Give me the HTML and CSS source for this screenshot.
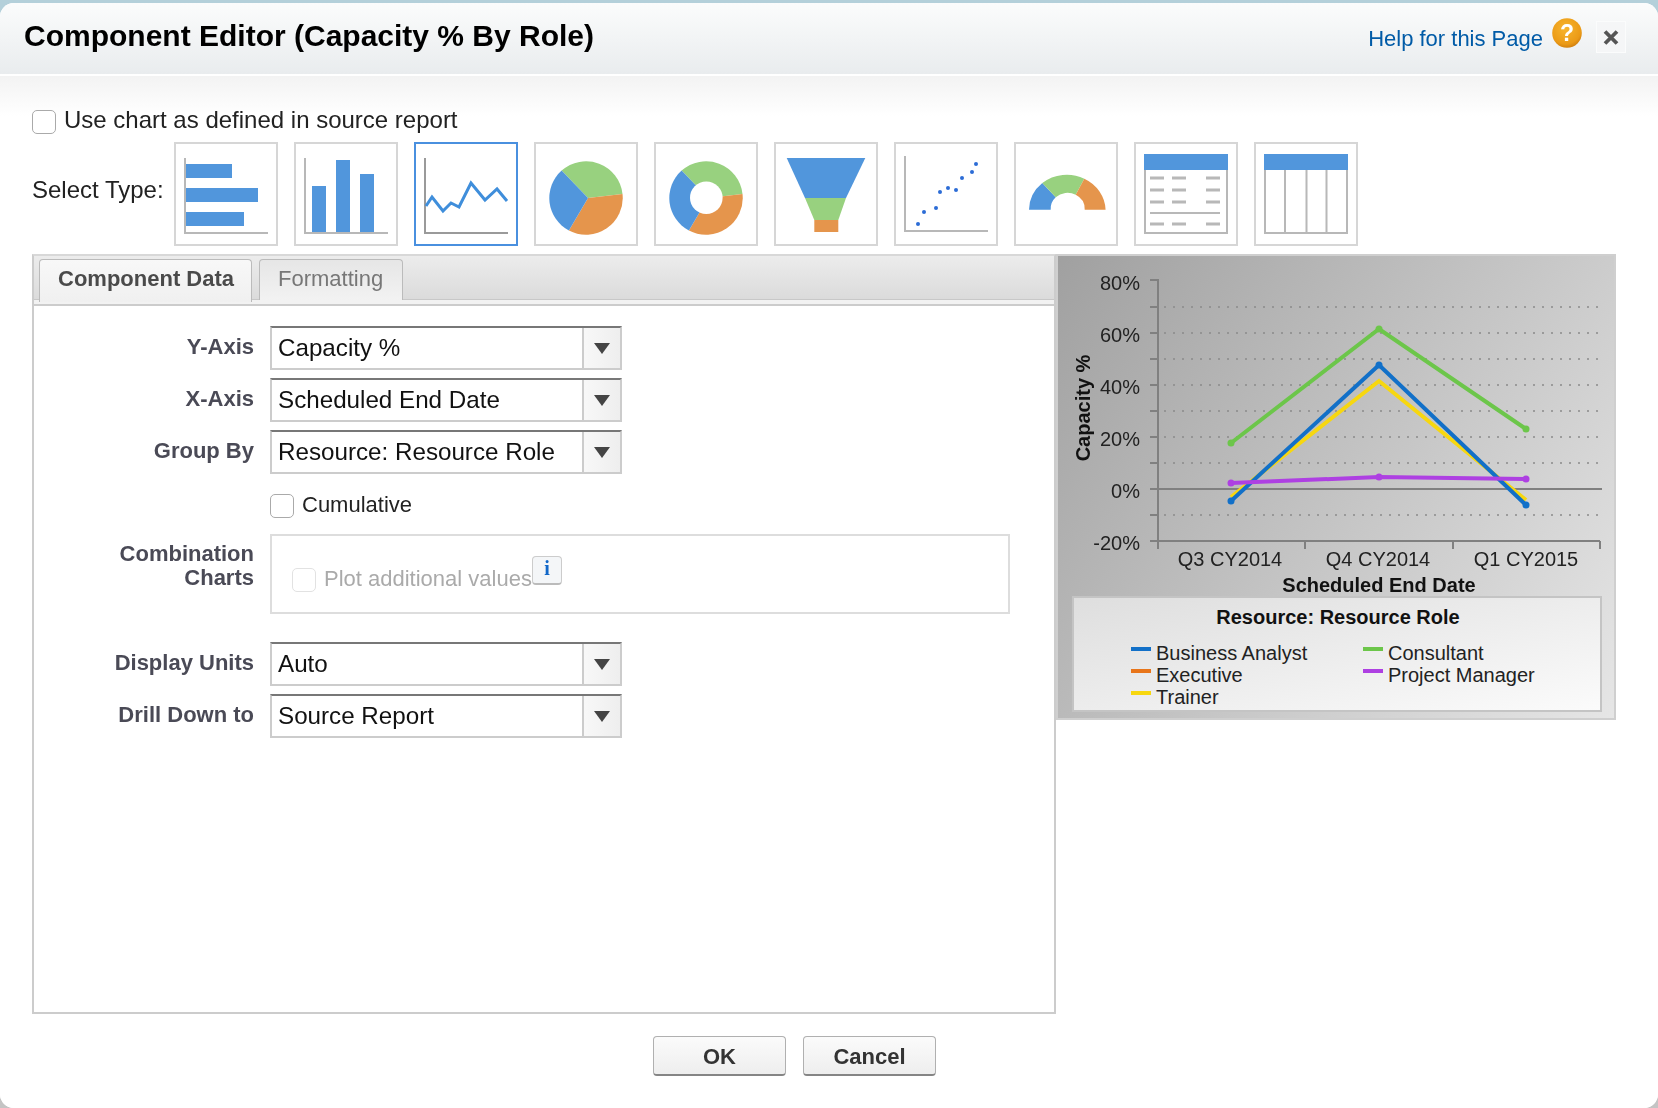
FILE: index.html
```html
<!DOCTYPE html>
<html lang="en">
<head>
<meta charset="utf-8">
<title>Component Editor</title>
<link rel="stylesheet" href="styles.css">
</head>
<body>
<div class="dialog">
  <header class="head">
    <h1 class="title">Component Editor (Capacity % By Role)</h1>
    <a class="help">Help for this Page</a>
    <svg class="help-ic" viewBox="0 0 30 30"><defs><radialGradient id="o" cx=".45" cy=".35" r=".7"><stop offset="0" stop-color="#f7b52e"/><stop offset=".75" stop-color="#eb9a16"/><stop offset="1" stop-color="#c9780c"/></radialGradient></defs><circle cx="15" cy="15" r="14.8" fill="url(#o)"/><text x="15" y="23" text-anchor="middle" class="help-q">?</text></svg>
    <div class="close"><svg class="close-x" viewBox="0 0 16 15"><path d="M2 1.5l12 12M14 1.5l-12 12" stroke="#555" stroke-width="3.8" fill="none"/></svg></div>
  </header>
  <div class="body">
    <label class="use"><span class="cb"></span>Use chart as defined in source report</label>
    <div class="types">
      <span class="types-l">Select Type:</span>
      <div class="tile"><svg viewBox="0 0 100 100"><path d="M9 14V89H92" class="ax"/><path d="M10 20h46v14H10zM10 44h72v14H10zM10 68h58v14H10z" class="b"/></svg></div>
      <div class="tile"><svg viewBox="0 0 100 100"><path d="M9 14V89H92" class="ax"/><path d="M16 42h14v46H16zM40 16h14v72H40zM64 30h14v58H64z" class="b"/></svg></div>
      <div class="tile on"><svg viewBox="0 0 100 100"><path d="M9 14V89H92" class="ax dk"/><polyline points="10,62 16,53 27,67 35,59 43,63 55,39 69,56 81,45 91,57" class="ln"/></svg></div>
      <div class="tile"><svg viewBox="0 0 100 100"><path d="M52 54L25.6 26.6A36.7 36.7 0 0 1 86.500 49.900Z" class="g"/><path d="M52 54L86.500 49.900A36.7 36.7 0 0 1 32.900 86.500Z" class="o"/><path d="M52 54L32.900 86.500A36.7 36.7 0 0 1 25.6 26.6Z" class="b"/></svg></div>
      <div class="tile"><svg viewBox="0 0 100 100"><path d="M52 54L25.6 26.6A36.7 36.7 0 0 1 86.500 49.900Z" class="g"/><path d="M52 54L86.500 49.900A36.7 36.7 0 0 1 32.900 86.500Z" class="o"/><path d="M52 54L32.900 86.500A36.7 36.7 0 0 1 25.6 26.6Z" class="b"/><circle cx="50.3" cy="53.7" r="16.3" fill="#fff"/></svg></div>
      <div class="tile"><svg viewBox="0 0 100 100"><path d="M10.7 14H89.3L70 54H29Z" class="b"/><path d="M29 54H70L62.3 76H38.3Z" class="g"/><path d="M38.3 76H62.3V88H38.3Z" class="o"/></svg></div>
      <div class="tile"><svg viewBox="0 0 100 100"><path d="M9 12V87H92" class="ax"/><g class="dots"><circle cx="22" cy="80" r="2"/><circle cx="28" cy="68" r="2"/><circle cx="40" cy="64" r="2"/><circle cx="44" cy="48" r="2"/><circle cx="52" cy="44" r="2"/><circle cx="60" cy="46" r="2"/><circle cx="66" cy="34" r="2"/><circle cx="76" cy="28" r="2"/><circle cx="80" cy="20" r="2"/></g></svg></div>
      <div class="tile"><svg viewBox="0 0 100 100"><path d="M13 65.7A38.3 36 0 0 1 26.3 39L39.7 53.3A17 16 0 0 0 34.7 65.7Z" class="b"/><path d="M26.3 39A38.3 36 0 0 1 68.3 34.7L59.7 50.7A17 16 0 0 0 39.7 53.3Z" class="g"/><path d="M68.3 34.7A38.3 36 0 0 1 89.6 65.7H68.7A17 16 0 0 0 59.7 50.7Z" class="o"/></svg></div>
      <div class="tile"><svg viewBox="0 0 100 100"><path d="M9 26V89H91V26" class="ax"/><path d="M8 10H92V26H8Z" class="b"/><path d="M14 34h14M36 34h14M70 34h14M14 46h14M36 46h14M70 46h14M14 58h14M36 58h14M70 58h14M14 80h14M36 80h14M70 80h14" class="ax th"/><path d="M14 69H84" class="ax"/></svg></div>
      <div class="tile"><svg viewBox="0 0 100 100"><path d="M9 26V89H91V26M29 26V89M50.500 26V89M70.500 26V89" class="ax"/><path d="M8 10H92V26H8Z" class="b"/></svg></div>
    </div>
    <div class="editor">
      <section class="panel">
        <div class="tabs">
          <div class="tab active">Component Data</div>
          <div class="tab">Formatting</div>
        </div>
        <div class="form">
          <div class="row"><span class="lab">Y-Axis</span><div class="sel"><span class="val">Capacity %</span><span class="drop"><i class="tri"></i></span></div></div>
          <div class="row"><span class="lab">X-Axis</span><div class="sel"><span class="val">Scheduled End Date</span><span class="drop"><i class="tri"></i></span></div></div>
          <div class="row"><span class="lab">Group By</span><div class="sel"><span class="val">Resource: Resource Role</span><span class="drop"><i class="tri"></i></span></div></div>
          <div class="row cum"><span class="lab"></span><label class="cum-l"><span class="cb"></span>Cumulative</label></div>
          <div class="row combo"><span class="lab two">Combination<br>Charts</span>
            <div class="box"><span class="cb off"></span><span class="plot">Plot additional values</span><span class="info">i</span></div>
          </div>
          <div class="row units"><span class="lab">Display Units</span><div class="sel"><span class="val">Auto</span><span class="drop"><i class="tri"></i></span></div></div>
          <div class="row"><span class="lab">Drill Down to</span><div class="sel"><span class="val">Source Report</span><span class="drop"><i class="tri"></i></span></div></div>
        </div>
      </section>
      <figure class="chart">
        <svg viewBox="1056 254 560 466" width="560" height="466">
          <g class="grid"><path d="M1164 307H1600M1164 333H1600M1164 359H1600M1164 385H1600M1164 411H1600M1164 437H1600M1164 463H1600M1164 515H1600"/></g>
          <path d="M1150 280H1158V541M1150 307H1158M1150 333H1158M1150 359H1158M1150 385H1158M1150 411H1158M1150 437H1158M1150 463H1158M1150 515H1158M1150 541H1600M1158 541V549M1305 541V549M1453 541V549M1600 541V549M1150 489H1602" class="axis"/>
          <g class="t" text-anchor="end"><text x="1140" y="290">80%</text><text x="1140" y="342">60%</text><text x="1140" y="394">40%</text><text x="1140" y="446">20%</text><text x="1140" y="498">0%</text><text x="1140" y="550">-20%</text></g>
          <g class="t" text-anchor="middle"><text x="1230" y="566">Q3 CY2014</text><text x="1378" y="566">Q4 CY2014</text><text x="1526" y="566">Q1 CY2015</text></g>
          <text x="1379" y="592" text-anchor="middle" class="tb">Scheduled End Date</text>
          <text transform="translate(1090 408) rotate(-90)" text-anchor="middle" class="tb">Capacity %</text>
          <polyline points="1231,443 1379,329 1526,429" class="s green"/>
          <polyline points="1231,497 1379,381 1526,500" class="s yellow"/>
          <polyline points="1231,501 1379,365 1526,505" class="s blue"/>
          <polyline points="1231,483 1379,477 1526,479" class="s purple"/>
          <g class="m-green"><circle cx="1231" cy="443" r="3.500"/><circle cx="1379" cy="329" r="3.500"/><circle cx="1526" cy="429" r="3.500"/></g>
          <g class="m-blue"><circle cx="1231" cy="501" r="3.500"/><circle cx="1379" cy="365" r="3.500"/><circle cx="1526" cy="505" r="3.500"/></g>
          <g class="m-purple"><circle cx="1231" cy="483" r="3.500"/><circle cx="1379" cy="477" r="3.500"/><circle cx="1526" cy="479" r="3.500"/></g>
          <defs><linearGradient id="lg" x1="0" y1="0" x2="1" y2="1"><stop offset="0" stop-color="#dedede"/><stop offset="1" stop-color="#fbfbfb"/></linearGradient></defs>
          <rect x="1073" y="597" width="528" height="114" fill="url(#lg)" stroke="#c4c4c4" stroke-width="2"/>
          <text x="1338" y="624" text-anchor="middle" class="tb">Resource: Resource Role</text>
          <g class="t">
            <text x="1156" y="660">Business Analyst</text><text x="1156" y="682">Executive</text><text x="1156" y="704">Trainer</text>
            <text x="1388" y="660">Consultant</text><text x="1388" y="682">Project Manager</text>
          </g>
          <path d="M1131 649h20" class="k blue"/><path d="M1131 671h20" class="k orange"/><path d="M1131 693h20" class="k yellow"/><path d="M1363 649h20" class="k green"/><path d="M1363 671h20" class="k purple"/>
        </svg>
      </figure>
    </div>
    <div class="foot">
      <button class="btn ok">OK</button>
      <button class="btn cancel">Cancel</button>
    </div>
  </div>
</div>
</body>
</html>
```

FILE: styles.css
```css
html{background:linear-gradient(#b4d0da 0 50%,#c4c4c4 50%);height:100%}
body{margin:0;padding-top:3px;font-family:"Liberation Sans",Arial,sans-serif;color:#111}
.dialog{height:1105px;background:#fff;border-radius:14px;overflow:hidden;filter:blur(.3px)}
.head{display:flex;align-items:flex-start;height:71px;box-sizing:border-box;padding:15px 32px 0 24px;background:linear-gradient(#fbfcfc,#e9ecee)}
.title{flex:1;margin:0;font-size:30px;line-height:36px;font-weight:700;color:#000}
.help{margin-top:8px;font-size:22px;line-height:26px;color:#015ba7}
.help-ic{width:30px;height:30px;margin-left:9px}
.help-q{font:700 23px "Liberation Sans",sans-serif;fill:#fff}
.close{display:flex;align-items:center;justify-content:center;width:30px;height:32px;margin:3px 0 0 14px;background:#f5f6f7;border:1px solid #fbfcfc;box-sizing:border-box}
.close-x{width:16px;height:15px}
.body{height:1032px;margin-top:2px;padding:32px 42px 0 32px;box-sizing:border-box;background:linear-gradient(#f3f3f3,#fff 40px)}
.use{display:flex;height:26px;gap:8px;font-size:24px;line-height:24px;color:#222}
.cb{display:block;flex:none;width:24px;height:24px;box-sizing:border-box;border:1.5px solid #aaa;border-radius:5px;background:#fff;margin-top:2px}
.cb.off{border-color:#e2e2e2}
.types{display:flex;gap:16px;margin-top:8px}
.types-l{width:126px;margin-top:34px;font-size:24px;line-height:28px;color:#222;white-space:nowrap}
.tile{width:104px;height:104px;box-sizing:border-box;border:2px solid #d6d6d6;background:#fff}
.tile.on{border-color:#4a90df}
.tile svg{display:block;width:100px;height:100px;filter:blur(.3px)}
.b{fill:#5196dc}
.g{fill:#98d17f}
.o{fill:#e5954c}
.ax{fill:none;stroke:#b8b8b8;stroke-width:2}
.ax.dk{stroke:#9a9a9a}
.ax.th{stroke-width:3}
.ln{fill:none;stroke:#3f8edb;stroke-width:3}
.dots{fill:#2c6cd6}
.editor{display:flex;align-items:flex-start;margin-top:8px}
.panel{width:1024px;height:760px;box-sizing:border-box;border:2px solid #ccc;border-top-color:#d8d8d8}
.tabs{display:flex;align-items:flex-start;gap:7px;height:50px;box-sizing:border-box;padding:3px 0 0 5px;background:linear-gradient(#ececec,#dbdbdb 43px,#c8c8c8 43px,#c8c8c8 44px,#f2f2f2 44px);border-bottom:2px solid #ccc}
.tab{width:144px;height:41px;box-sizing:border-box;padding-left:18px;border:1px solid #bbb;border-bottom:0;border-radius:4px 4px 0 0;font-size:22px;line-height:38px;color:#777;background:linear-gradient(#e6e6e6,#f2f2f2)}
.tab.active{width:213px;height:43px;font-weight:700;color:#4a4a4a;background:linear-gradient(#f8f8f8,#f0f0f0)}
.form{padding-top:20px}
.row{display:flex;gap:16px;margin-bottom:8px}
.lab{width:220px;flex:none;text-align:right;font-size:22px;font-weight:700;line-height:42px;color:#4a4a56}
.lab.two{line-height:24px;padding-top:8px}
.sel{display:flex;width:352px;height:44px;box-sizing:border-box;border:2px solid #ccc;border-top-color:#777}
.val{flex:1;padding-left:6px;font-size:24.2px;line-height:40px;color:#111}
.drop{display:flex;align-items:center;justify-content:center;width:36px;border-left:2px solid #ccc;background:linear-gradient(90deg,#f8f8f8,#eee)}
.tri{border-style:solid;border-width:11px 8px 0;border-color:#444 transparent transparent}
.cum{margin:20px 0 16px}
.cum-l{display:flex;gap:8px;font-size:22px;line-height:22px;color:#222}
.cum-l .cb{margin-top:0}
.combo{margin-bottom:28px}
.box{display:flex;width:740px;height:80px;box-sizing:border-box;padding:32px 0 0 20px;border:2px solid #ddd}
.box .cb{margin-top:0}
.plot{margin-left:8px;font-size:22px;line-height:22px;color:#aaa}
.info{width:30px;height:29px;margin:-12px 0 0;box-sizing:border-box;border:1px solid #ccc;border-bottom:2px solid #bbb;border-radius:4px;background:#f4f6f8;text-align:center;font:700 20px/22px "Liberation Serif",serif;color:#1167c8}
.chart{width:560px;height:466px;margin:0;background:linear-gradient(125deg,#a0a0a0,#e6e6e6);box-shadow:inset 0 0 0 2px #cfcfcf}
.chart svg{display:block;filter:blur(.35px)}
.t{font-size:20px;fill:#222}
.tb{font-size:20px;font-weight:700;fill:#111}
.grid{fill:none;stroke:#8a8a8a;stroke-width:1.500;stroke-dasharray:2 7}
.axis{fill:none;stroke:#808080;stroke-width:2}
.s{fill:none;stroke-width:4}
.k{fill:none;stroke-width:4}
.green{stroke:#6cc64a}
.blue{stroke:#1270c8}
.yellow{stroke:#f7d70f}
.purple{stroke:#ae40e2}
.orange{stroke:#e8751a}
.m-green{fill:#6cc64a}
.m-blue{fill:#1270c8}
.m-purple{fill:#ae40e2}
.foot{display:flex;gap:17px;margin:22px 0 0 621px}
.btn{width:133px;height:40px;padding:2px 0 0;box-sizing:border-box;border:1px solid #b0b0b0;border-bottom:2px solid #858585;border-radius:4px;background:linear-gradient(#fbfbfb,#eeeeee);font:700 22px "Liberation Sans",sans-serif;color:#333}
```
